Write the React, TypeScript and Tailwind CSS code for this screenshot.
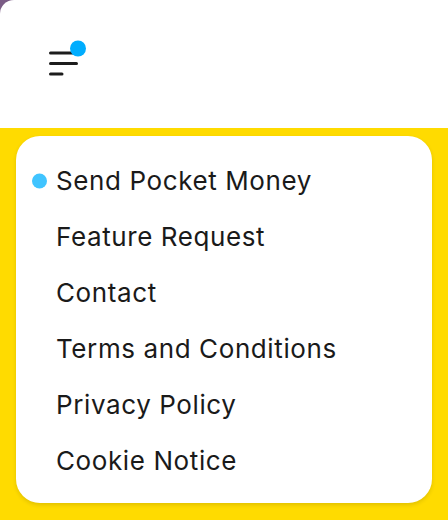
import React from "react";

const items = [
  "Send Pocket Money",
  "Feature Request",
  "Contact",
  "Terms and Conditions",
  "Privacy Policy",
  "Cookie Notice",
];

export default function App() {
  return (
    <div className="w-[448px] h-[520px] bg-[#7b5c86] overflow-hidden" style={{ fontFamily: "Inter, 'Noto Sans', sans-serif" }}>
      <div className="w-full h-full bg-white rounded-tl-[14px] flex flex-col">
        <div className="h-[128px] flex items-start pl-[47px] pt-[40px]">
          <div className="relative w-[40px] h-[40px]">
            <svg width="40" height="40" viewBox="0 0 40 40" className="absolute left-0 top-0">
              <line x1="3.5" y1="13" x2="26" y2="13" stroke="#1c1c1c" strokeWidth="3" strokeLinecap="round" />
              <line x1="3.5" y1="23.5" x2="29.5" y2="23.5" stroke="#1c1c1c" strokeWidth="3" strokeLinecap="round" />
              <line x1="3.5" y1="34" x2="15" y2="34" stroke="#1c1c1c" strokeWidth="3" strokeLinecap="round" />
              <circle cx="31" cy="8.5" r="8" fill="#00adfe" />
            </svg>
          </div>
        </div>
        <div className="flex-1 bg-[#ffdb00] px-4 pt-2">
          <div className="bg-white rounded-[24px] shadow-[0_2px_4px_rgba(0,0,0,0.12)] pt-[17px] pb-[14px] h-[367px]">
            {items.map((t, i) => (
              <div key={t} className="h-[56px] flex items-center relative pl-[40px]">
                {i === 0 && (
                  <span className="absolute left-[16px] top-1/2 -translate-y-1/2 w-[15px] h-[15px] rounded-full bg-[#40c4ff]" />
                )}
                <span className="text-[26px] tracking-[0.6px] text-[#1a1a1a] leading-none">{t}</span>
              </div>
            ))}
          </div>
        </div>
      </div>
    </div>
  );
}
